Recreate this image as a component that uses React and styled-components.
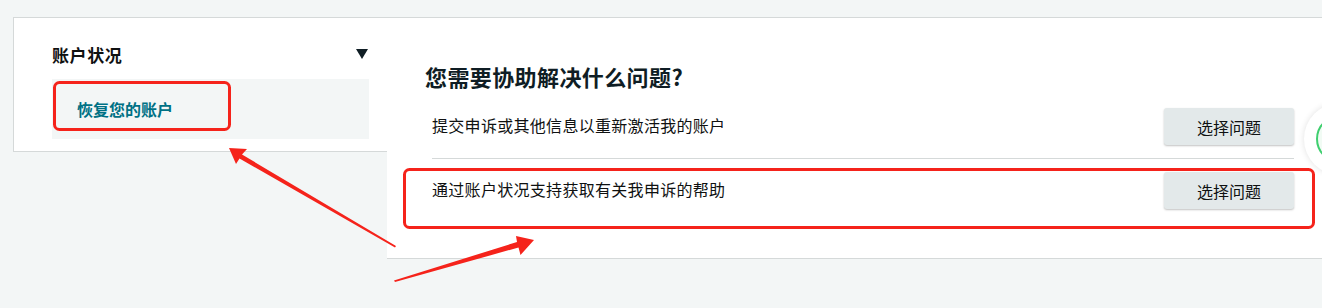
import React from 'react';
import styled, { createGlobalStyle } from 'styled-components';

const GlobalStyle = createGlobalStyle`
  html, body {
    margin: 0;
    padding: 0;
    background: #f3f6f6;
    overflow: hidden;
  }
  body {
    font-family: "Noto Sans CJK SC", "Noto Sans", sans-serif;
    color: #0f1111;
  }
`;

const issues = [
  { text: '提交申诉或其他信息以重新激活我的账户', button: '选择问题' },
  { text: '通过账户状况支持获取有关我申诉的帮助', button: '选择问题' },
];

export default function App() {
  return (
    <>
      <GlobalStyle />
      <Page>
        <SideCard>
          <SideHeader>
            <SideTitle>账户状况</SideTitle>
            <Caret />
          </SideHeader>
          <SideItem>恢复您的账户</SideItem>
        </SideCard>

        <MainPanel>
          <Heading>您需要协助解决什么问题?</Heading>
          <IssueList>
            {issues.map((item, i) => (
              <IssueRow key={i} last={i === issues.length - 1}>
                <IssueText>{item.text}</IssueText>
                <SelectButton>{item.button}</SelectButton>
              </IssueRow>
            ))}
          </IssueList>
        </MainPanel>
      </Page>

      <ChatBubble>
        <ChatRing />
      </ChatBubble>

      {/* red annotation marks drawn over the page */}
      <Annotations viewBox="0 0 1322 308" width="1322" height="308">
        <rect x="54.5" y="82.5" width="175" height="47" rx="5" fill="none" stroke="#f5231b" strokeWidth="3" />
        <rect x="404.5" y="169.5" width="909" height="58" rx="5" fill="none" stroke="#f5231b" strokeWidth="3" />
        <polygon
          fill="#f5231b"
          points="229,148 247,149 242,154.5 396,246 395,247.5 239.5,158.5 236,164"
        />
        <polygon
          fill="#f5231b"
          points="534,240 516,236 517,242 394,280.5 395,282 518.5,247.5 520.5,255"
        />
      </Annotations>
    </>
  );
}

const Page = styled.div`
  display: grid;
  grid-template-columns: 375px 960px;
  align-items: start;
  padding: 17px 0 0 13px;
`;

const SideCard = styled.div`
  background: #ffffff;
  border: 1px solid #d5d9d9;
  padding: 15px 18px 12px 38px;
`;

const SideHeader = styled.div`
  display: flex;
  align-items: center;
  justify-content: space-between;
  height: 42px;
  margin-bottom: 4px;
`;

const SideTitle = styled.span`
  font-size: 17px;
  font-weight: 700;
  color: #0f1111;
  letter-spacing: 0.6px;
`;

const Caret = styled.span`
  width: 0;
  height: 0;
  margin-right: 1px;
  border-left: 6px solid transparent;
  border-right: 6px solid transparent;
  border-top: 10px solid #0f1d24;
`;

const SideItem = styled.div`
  display: flex;
  align-items: center;
  height: 60px;
  padding-left: 25px;
  background: #f3f6f6;
  color: #007185;
  font-size: 16px;
  font-weight: 700;
`;

const MainPanel = styled.div`
  background: #ffffff;
  border-top: 1px solid #d5d9d9;
  border-bottom: 1px solid #d5d9d9;
  padding: 46px 40px 36px 38px;
  margin-left: -1px;
`;

const Heading = styled.h2`
  margin: 0 0 6px 0;
  font-size: 22px;
  line-height: 25px;
  font-weight: 700;
  letter-spacing: 0.4px;
  color: #0f1d24;
`;

const IssueList = styled.div`
  display: flex;
  flex-direction: column;
  padding-left: 7px;
  width: 862px;
`;

const IssueRow = styled.div`
  display: flex;
  align-items: center;
  justify-content: space-between;
  padding: 13px 0;
  border-bottom: ${(p) => (p.last ? 'none' : '1px solid #d5d9d9')};
`;

const IssueText = styled.span`
  font-size: 16px;
  line-height: 22px;
  padding-bottom: 4px;
  letter-spacing: 0.3px;
  color: #0f1111;
`;

const SelectButton = styled.button`
  width: 130px;
  height: 37px;
  border: none;
  border-radius: 3px;
  background: #e3e9ea;
  box-shadow: 0 1px 2px rgba(15, 17, 17, 0.25);
  font-family: "Noto Sans CJK SC", "Noto Sans", sans-serif;
  font-size: 16px;
  color: #0f1111;
  cursor: pointer;
`;

const ChatBubble = styled.div`
  position: fixed;
  top: 103px;
  right: -54px;
  width: 72px;
  height: 72px;
  border-radius: 50%;
  background: #ffffff;
  box-shadow: 0 0 6px rgba(0, 0, 0, 0.12);
  display: flex;
  align-items: center;
  justify-content: center;
`;

const ChatRing = styled.div`
  width: 48px;
  height: 48px;
  border-radius: 50%;
  border: 2px solid #3fcf6f;
  box-sizing: border-box;
  background: #f1fbf4;
`;

const Annotations = styled.svg`
  position: fixed;
  left: 0;
  top: 0;
  pointer-events: none;
`;
